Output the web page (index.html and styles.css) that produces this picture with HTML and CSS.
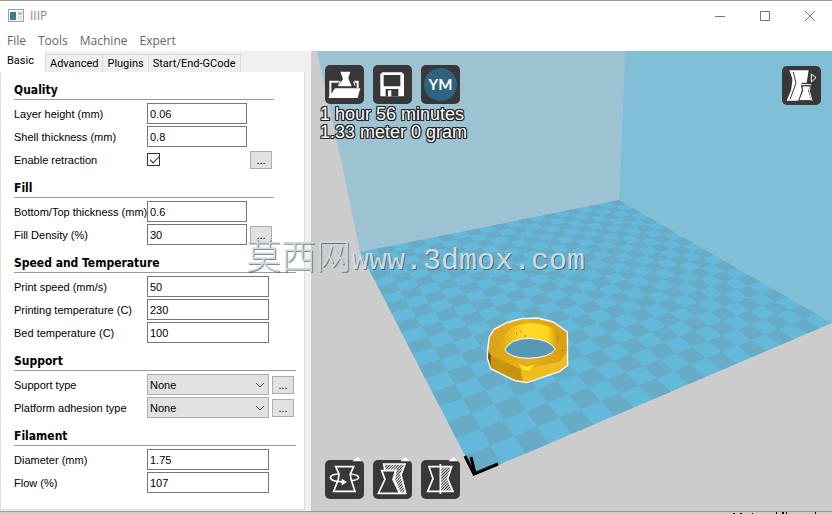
FILE: index.html
```
<!DOCTYPE html>
<html lang="en">
    <head>
        <meta charset="utf-8">
        <title>IIIP</title>
        <link rel="stylesheet" href="styles.css">
    </head>
    <body>
        <header class="titlebar">
            <svg class="appIcon" width="16" height="13" viewBox="0 0 16 13">
                <rect x="0.5" y="0.5" width="15" height="12" fill="#f4f6f7" stroke="#9aa3a8"/>
                <rect x="2" y="3" width="6" height="8" fill="#3f7f8c"/>
                <rect x="10" y="3" width="4" height="3" fill="#b9c4ca"/>
                <rect x="10" y="7" width="4" height="4" fill="#dde3e6"/>
            </svg>
            <span class="appName">IIIP</span>
            <div class="windowBtns">
                <button aria-label="Minimize"><svg width="12" height="12" viewBox="0 0 12 12"><path d="M1 6.5h10"/></svg></button>
                <button aria-label="Maximize"><svg width="12" height="12" viewBox="0 0 12 12"><path d="M1.500 1.500h9v9h-9z"/></svg></button>
                <button aria-label="Close"><svg width="12" height="12" viewBox="0 0 12 12"><path d="M1 1l10 10M11 1L1 11"/></svg></button>
            </div>
        </header>
        <nav class="menu">
            <button>File</button>
            <button>Tools</button>
            <button>Machine</button>
            <button>Expert</button>
        </nav>
        <main class="main">
            <div class="side">
                <div class="tabs" role="tablist">
                    <button class="tab active" role="tab" aria-selected="true">Basic</button>
                    <button class="tab" role="tab">Advanced</button>
                    <button class="tab" role="tab">Plugins</button>
                    <button class="tab" role="tab">Start/End-GCode</button>
                </div>
                <form class="page">
                    <section class="group">
                        <h2>Quality</h2>
                        <div class="row">
                            <label for="layerHeight">Layer height (mm)</label>
                            <input type="text" id="layerHeight" value="0.06">
                        </div>
                        <div class="row">
                            <label for="shell">Shell thickness (mm)</label>
                            <input type="text" id="shell" value="0.8">
                        </div>
                        <div class="row">
                            <label for="retraction">Enable retraction</label>
                            <input type="checkbox" id="retraction" checked>
                            <button type="button" class="more" aria-label="Retraction settings">...</button>
                        </div>
                    </section>
                    <section class="group">
                        <h2>Fill</h2>
                        <div class="row">
                            <label for="bottomTop">Bottom/Top thickness (mm)</label>
                            <input type="text" id="bottomTop" value="0.6">
                        </div>
                        <div class="row">
                            <label for="density">Fill Density (%)</label>
                            <input type="text" id="density" value="30">
                            <button type="button" class="more" aria-label="Fill settings">...</button>
                        </div>
                    </section>
                    <section class="group wide">
                        <h2>Speed and Temperature</h2>
                        <div class="row">
                            <label for="speed">Print speed (mm/s)</label>
                            <input type="text" id="speed" value="50">
                        </div>
                        <div class="row">
                            <label for="printTemp">Printing temperature (C)</label>
                            <input type="text" id="printTemp" value="230">
                        </div>
                        <div class="row">
                            <label for="bedTemp">Bed temperature (C)</label>
                            <input type="text" id="bedTemp" value="100">
                        </div>
                    </section>
                    <section class="group wide">
                        <h2>Support</h2>
                        <div class="row">
                            <label for="support">Support type</label>
                            <div class="selectBox">
                                <select id="support"><option>None</option></select>
                                <svg width="10" height="6" viewBox="0 0 10 6"><path d="M1 1l4 4 4-4"/></svg>
                            </div>
                            <button type="button" class="more" aria-label="Support settings">...</button>
                        </div>
                        <div class="row">
                            <label for="adhesion">Platform adhesion type</label>
                            <div class="selectBox">
                                <select id="adhesion"><option>None</option></select>
                                <svg width="10" height="6" viewBox="0 0 10 6"><path d="M1 1l4 4 4-4"/></svg>
                            </div>
                            <button type="button" class="more" aria-label="Adhesion settings">...</button>
                        </div>
                    </section>
                    <section class="group wide">
                        <h2>Filament</h2>
                        <div class="row">
                            <label for="diameter">Diameter (mm)</label>
                            <input type="text" id="diameter" value="1.75">
                        </div>
                        <div class="row">
                            <label for="flow">Flow (%)</label>
                            <input type="text" id="flow" value="107">
                        </div>
                    </section>
                </form>
            </div>
            <div class="view">
                <svg class="scene" viewBox="311 51 521 460" preserveAspectRatio="xMidYMid slice">
                    <defs>
                        <linearGradient id="ring" x1="0" x2="1" y1="0" y2="0">
                            <stop offset="0" stop-color="#d9a318"/>
                            <stop offset="0.5" stop-color="#e6b01c"/>
                            <stop offset="1" stop-color="#d89d14"/>
                        </linearGradient>
                        <linearGradient id="bore" x1="0" x2="1" y1="0" y2="0">
                            <stop offset="0" stop-color="#e2a91a"/>
                            <stop offset="0.4" stop-color="#ffdc22"/>
                            <stop offset="0.8" stop-color="#ffd61c"/>
                            <stop offset="1" stop-color="#c58d14"/>
                        </linearGradient>
                    </defs>
                    <path d="M317 51H625L619 200 360 252 341 160z" fill="#9dc3d3"/>
                    <path d="M625 51H832V323L619 200z" fill="#80bfd5"/>
                    <path d="M475 475L832 323 619 200 360 252z" fill="#64b9da"/>
                    <path id="cells" fill="#68abc7"/>
                    <g transform="translate(460 300) scale(0.3333)">
                        <path d="M84 140L88 110 102 88 140 68 185 56 232 54 280 66 322 96 323 196 300 214 200 248 165 242 92 206 82 175z" fill="#dba518"/>
                        <path d="M84 150L94 170 92 206 82 175z" fill="#6c5514"/>
                        <path d="M92 166L180 206 185 246 165 242 92 206z" fill="#c9930f"/>
                        <path d="M220 202L300 184 322 152 323 196 300 214 190 247 184 208z" fill="#f0bc1e"/>
                        <path d="M84 140L88 110 102 88 140 68 185 56 232 54 280 66 322 96 322 152 300 184 222 202 180 206 96 168z" fill="url(#ring)"/>
                        <path d="M124 136Q126 94 172 76Q220 62 262 78Q300 94 298 120Q292 134 284 148Q272 116 210 114Q146 116 134 150z" fill="url(#bore)"/>
                        <path d="M134 150Q150 116 208 115Q270 118 286 148Q270 172 206 175Q152 174 134 150z" fill="#5799b5"/>
                        <path d="M176 192L200 200 224 194 206 212 188 210z" fill="#ffe02a"/>
                        <path d="M168 98h3v3h-3zM194 106h4v4h-4zM180 94h2v3h-2zM306 150h3v3h-3z" fill="#8a5c10"/>
                        <path d="M134 150Q150 116 208 115Q270 118 286 148Q270 172 206 175Q152 174 134 150z" fill="none" stroke="#fff" stroke-width="3"/>
                        <path d="M84 140L88 110 102 88 140 68 185 56 232 54 280 66 322 96 323 196 300 214 200 248 165 242 92 206 82 175z" fill="none" stroke="#fff" stroke-width="4" stroke-linejoin="round"/>
                    </g>
                    <path d="M465 456L474 474 498 464M471 457L475 473" fill="none" stroke="#000" stroke-width="3"/>
                </svg>
                <div class="tools top">
                    <button class="tool" aria-label="Load">
                        <svg viewBox="0 0 117 117">
                            <path d="M16 96V50H40M88 50H98V70" fill="none" stroke="#fff" stroke-width="6"/>
                            <path d="M30 70H106L98 99H10zM46 20H76L70 40 80 64H40L54 42z" fill="#fff"/>
                            <path d="M38 50L46 50 40 62M86 50L90 62" fill="none" stroke="#fff" stroke-width="3"/>
                        </svg>
                    </button>
                    <button class="tool" aria-label="Save">
                        <svg viewBox="0 0 117 117">
                            <path d="M22 28L28 22H86L93 28V94H22z" fill="#fff"/>
                            <path d="M32 30H82V64H32zM38 72H76V94H38z" fill="#383838"/>
                            <path d="M45 76H55V94H45z" fill="#fff"/>
                        </svg>
                    </button>
                    <button class="tool ym" aria-label="Share on YouMagine"><span>YM</span></button>
                </div>
                <p class="info">1 hour 56 minutes<br>1.33 meter 0 gram</p>
                <button class="tool viewMode" aria-label="View mode">
                    <svg viewBox="0 0 117 117">
                        <path d="M22 13H80L74 50H60L56 56 60 70 50 104H14L36 52z" fill="#fff"/>
                        <path d="M34 18L42 52 24 100M60 60H84L80 76 90 104H50L62 74z" fill="#fff" stroke="#383838" stroke-width="3"/>
                        <path d="M56 56H88M88 24L102 35 88 48zM66 62L70 76 58 102M84 62L82 76 90 104" fill="none" stroke="#fff" stroke-width="3"/>
                    </svg>
                </button>
                <div class="tools bottom">
                    <button class="tool" aria-label="Rotate">
                        <svg viewBox="0 0 117 117">
                            <path d="M32 20H86L76 42 78 58 90 94H26L40 58 42 42z" fill="none" stroke="#fff" stroke-width="5"/>
                            <path d="M40 42C10 44 8 60 36 64L60 66M78 42C108 46 108 58 80 62" fill="none" stroke="#fff" stroke-width="5"/>
                            <path d="M50 56L66 66 50 76zM82 4L97 -8 112 4z" fill="#fff"/>
                        </svg>
                    </button>
                    <button class="tool" aria-label="Scale">
                        <svg viewBox="0 0 117 117">
                            <defs>
                                <pattern id="hatch" width="6" height="6" patternUnits="userSpaceOnUse" patternTransform="rotate(45)">
                                    <path d="M0 0H3V6H0z" fill="#fff"/>
                                </pattern>
                            </defs>
                            <path d="M32 12H96L84 44 98 100H82L64 60 68 32H36z" fill="url(#hatch)" stroke="#fff" stroke-width="5"/>
                            <path d="M26 32H68L60 58 80 100H16L36 58z" fill="#383838" stroke="#fff" stroke-width="5"/>
                            <path d="M82 4L97 -8 112 4z" fill="#fff"/>
                        </svg>
                    </button>
                    <button class="tool" aria-label="Mirror">
                        <svg viewBox="0 0 117 117">
                            <path d="M58 20H92L80 56 96 94H58z" fill="url(#hatch)"/>
                            <path d="M24 20H92L80 56 96 94H20L36 56z" fill="none" stroke="#fff" stroke-width="5"/>
                            <path d="M58 12V102" stroke="#fff" stroke-width="5"/>
                            <path d="M82 4L97 -8 112 4z" fill="#fff"/>
                        </svg>
                    </button>
                </div>
            </div>
        </main>
        <footer class="edge">
            <svg width="100" height="2" viewBox="0 0 100 2"><path d="M2 1h2v1h-2zM9 1h2v1h-2zM21 1h1v1h-1zM45 0h1v2h-1zM51 0h2v2h-2zM55 0h1v2h-1zM84 0h1v2h-1z"/></svg>
        </footer>
        <div class="watermark"><span class="cjk">莫西网</span>www.3dmox.com</div>
        <script src="scene.js"></script>
    </body>
</html>
```
FILE: styles.css
```
* {
    box-sizing: border-box;
}
body {
    margin: 0;
    height: 100vh;
    display: flex;
    flex-direction: column;
    background: #fff;
    border-top: 1px solid #999;
    font-family: "Liberation Sans", sans-serif;
    font-size: 11px;
    color: #000;
    overflow: hidden;
}
button, input, select {
    font: inherit;
    color: inherit;
    margin: 0;
}
.titlebar {
    display: flex;
    align-items: center;
    height: 29px;
    padding-left: 8px;
    gap: 6px;
    font-family: "Open Sans", sans-serif;
    font-size: 12px;
    color: #888;
}
.windowBtns {
    margin-left: auto;
    display: flex;
}
.windowBtns button {
    width: 45px;
    height: 28px;
    padding: 0;
    border: 0;
    background: none;
}
.windowBtns svg {
    display: block;
    margin: 0 auto;
    fill: none;
    stroke: #777;
}
.menu {
    display: flex;
    gap: 12px;
    height: 21px;
    padding-left: 7px;
    font-family: "Open Sans", sans-serif;
    font-size: 12px;
    color: #666;
}
.menu button {
    border: 0;
    padding: 0;
    background: none;
}
.main {
    flex: 1;
    display: flex;
    min-height: 0;
}
.side {
    flex: none;
    width: 311px;
    display: flex;
    flex-direction: column;
    padding-right: 6px;
    padding-bottom: 1px;
    background: #f0f0f0;
}
.tabs {
    display: flex;
    align-items: flex-end;
    height: 21px;
    font-family: Roboto, sans-serif;
}
.tab {
    height: 18px;
    padding: 0 4px;
    border: 1px solid #d9d9d9;
    border-left: 0;
    border-bottom: 0;
    background: #f0f0f0;
    line-height: 16px;
}
.tab.active {
    height: 21px;
    padding: 0 11px 2px 7px;
    border-top: 0;
    background: #fff;
}
.page {
    flex: 1;
    padding: 8px 0 0 13px;
    background: #fff;
    border: 1px solid #dcdcdc;
    border-top: 0;
}
.group {
    width: 260px;
    margin-bottom: 8px;
}
.group.wide {
    width: 282px;
}
.group h2 {
    margin: 0 0 3px;
    height: 20px;
    border-bottom: 1px solid #999;
    font-family: "DejaVu Sans Condensed", "DejaVu Sans", sans-serif;
    font-size: 12px;
    line-height: 20px;
}
.row {
    display: grid;
    grid-template-columns: 130px 100px 22px;
    column-gap: 3px;
    align-items: center;
    height: 21px;
    margin-bottom: 2px;
}
.wide .row {
    grid-template-columns: 130px 122px 22px;
}
.row label {
    white-space: nowrap;
}
.row input[type=text] {
    width: 100%;
    height: 21px;
    padding: 0 2px;
    border: 1px solid #777;
    background: #fff;
}
.row input[type=checkbox] {
    appearance: none;
    width: 13px;
    height: 13px;
    border: 1px solid #333;
    background: #fff;
}
.row input[type=checkbox]:checked::before {
    content: "";
    display: block;
    width: 8px;
    height: 4px;
    margin: 2px 0 0 2px;
    border-left: 1px solid #222;
    border-bottom: 1px solid #222;
    transform: rotate(-45deg);
}
.more {
    height: 18px;
    padding: 0;
    border: 1px solid #adadad;
    background: #e1e1e1;
    line-height: 12px;
}
.selectBox {
    display: grid;
    align-items: center;
}
.selectBox select, .selectBox svg {
    grid-area: 1 / 1;
}
.selectBox select {
    appearance: none;
    height: 21px;
    padding: 0 2px;
    border: 1px solid #adadad;
    border-radius: 0;
    background: #e1e1e1;
}
.selectBox svg {
    justify-self: end;
    margin-right: 4px;
    fill: none;
    stroke: #555;
    pointer-events: none;
}
.view {
    flex: 1;
    position: relative;
    background: #ccc;
}
.scene {
    position: absolute;
    width: 100%;
    height: 100%;
}
.tools {
    position: absolute;
    left: 14px;
    display: flex;
    gap: 9px;
}
.tools.top {
    top: 14px;
}
.tools.bottom {
    bottom: 12px;
}
.tool {
    width: 39px;
    height: 39px;
    padding: 0;
    border: 0;
    border-radius: 5px;
    background: #383838;
}
.tool svg {
    display: block;
    width: 39px;
    height: 39px;
    overflow: visible;
}
.ym span {
    display: block;
    width: 33px;
    height: 33px;
    margin: 0 auto;
    border-radius: 50%;
    background: #2f6380;
    color: #fff;
    font-family: Lato, sans-serif;
    font-size: 15px;
    font-weight: bold;
    line-height: 33px;
}
.viewMode {
    position: absolute;
    top: 15px;
    right: 11px;
}
.info {
    position: absolute;
    left: 9px;
    top: 54px;
    margin: 0;
    font-size: 18px;
    line-height: 18px;
    color: #fff;
    white-space: nowrap;
    text-shadow: 1px 0 #222, -1px 0 #222, 0 1px #222, 0 -1px #222, 1px 1px #222, -1px -1px #222, 1px -1px #222, -1px 1px #222;
}
.edge {
    display: flex;
    justify-content: flex-end;
    height: 3px;
    padding-right: 1px;
    border-top: 1px solid #999;
    background: #ccc;
}
.watermark {
    position: absolute;
    left: 246px;
    top: 234px;
    font-family: "Liberation Mono", monospace;
    font-size: 30px;
    line-height: 40px;
    color: #d0dade;
    text-shadow: 1px 1px rgba(50, 60, 70, 0.6);
    white-space: nowrap;
    pointer-events: none;
}
.cjk {
    font-family: "Noto Sans CJK SC", sans-serif;
    font-size: 35px;
    font-weight: 300;
}
```
FILE: scene.js
```
// corners of the build plate: front, right, back, left
var plate = [[475, 475], [832, 323], [619, 200], [360, 252]];
var count = 20;

var dx1 = plate[1][0] - plate[2][0], dy1 = plate[1][1] - plate[2][1];
var dx2 = plate[3][0] - plate[2][0], dy2 = plate[3][1] - plate[2][1];
var sx = plate[0][0] - plate[1][0] + plate[2][0] - plate[3][0];
var sy = plate[0][1] - plate[1][1] + plate[2][1] - plate[3][1];
var den = dx1 * dy2 - dx2 * dy1;
var g = (sx * dy2 - dx2 * sy) / den;
var h = (dx1 * sy - sx * dy1) / den;

function project(i, j) {
    var u = i / count, v = j / count;
    var w = g * u + h * v + 1;
    return [0, 1].map(function(k) {
        var a = plate[1][k] - plate[0][k] + g * plate[1][k];
        var b = plate[3][k] - plate[0][k] + h * plate[3][k];
        return ((a * u + b * v + plate[0][k]) / w).toFixed(2);
    }).join(" ");
}

var d = "";
for (var i = 0; i < count; i++) {
    for (var j = 0; j < count; j++) {
        if ((i + j) % 2 == 0) {
            d += "M" + project(i, j) + "L" + project(i + 1, j) + "L" + project(i + 1, j + 1) + "L" + project(i, j + 1) + "z";
        }
    }
}
document.getElementById("cells").setAttribute("d", d);
```
